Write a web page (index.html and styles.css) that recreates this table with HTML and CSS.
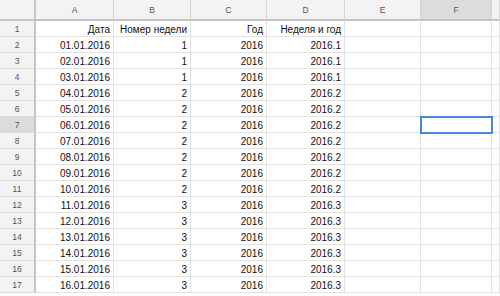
FILE: index.html
```html
<!DOCTYPE html>
<html lang="ru">
<head>
    <meta charset="UTF-8">
    <meta name="viewport" content="width=device-width, initial-scale=1.0">
    <title>Неделя и год</title>
    <link rel="stylesheet" href="styles.css">
</head>
<body>
    <table class="sheet">
        <colgroup>
            <col class="col-rowhead">
            <col class="col-a">
            <col class="col-b">
            <col class="col-c">
            <col class="col-d">
            <col class="col-e">
            <col class="col-f">
            <col class="col-g">
        </colgroup>
        <thead>
            <tr>
                <th class="corner"></th>
                <th>A</th>
                <th>B</th>
                <th>C</th>
                <th>D</th>
                <th>E</th>
                <th class="active">F</th>
                <th></th>
            </tr>
        </thead>
        <tbody>
            <tr><th>1</th><td>Дата</td><td>Номер недели</td><td>Год</td><td>Неделя и год</td><td></td><td></td><td></td></tr>
            <tr><th>2</th><td>01.01.2016</td><td>1</td><td>2016</td><td>2016.1</td><td></td><td></td><td></td></tr>
            <tr><th>3</th><td>02.01.2016</td><td>1</td><td>2016</td><td>2016.1</td><td></td><td></td><td></td></tr>
            <tr><th>4</th><td>03.01.2016</td><td>1</td><td>2016</td><td>2016.1</td><td></td><td></td><td></td></tr>
            <tr><th>5</th><td>04.01.2016</td><td>2</td><td>2016</td><td>2016.2</td><td></td><td></td><td></td></tr>
            <tr><th>6</th><td>05.01.2016</td><td>2</td><td>2016</td><td>2016.2</td><td></td><td></td><td></td></tr>
            <tr><th class="active">7</th><td>06.01.2016</td><td>2</td><td>2016</td><td>2016.2</td><td></td><td class="selected"></td><td></td></tr>
            <tr><th>8</th><td>07.01.2016</td><td>2</td><td>2016</td><td>2016.2</td><td></td><td></td><td></td></tr>
            <tr><th>9</th><td>08.01.2016</td><td>2</td><td>2016</td><td>2016.2</td><td></td><td></td><td></td></tr>
            <tr><th>10</th><td>09.01.2016</td><td>2</td><td>2016</td><td>2016.2</td><td></td><td></td><td></td></tr>
            <tr><th>11</th><td>10.01.2016</td><td>2</td><td>2016</td><td>2016.2</td><td></td><td></td><td></td></tr>
            <tr><th>12</th><td>11.01.2016</td><td>3</td><td>2016</td><td>2016.3</td><td></td><td></td><td></td></tr>
            <tr><th>13</th><td>12.01.2016</td><td>3</td><td>2016</td><td>2016.3</td><td></td><td></td><td></td></tr>
            <tr><th>14</th><td>13.01.2016</td><td>3</td><td>2016</td><td>2016.3</td><td></td><td></td><td></td></tr>
            <tr><th>15</th><td>14.01.2016</td><td>3</td><td>2016</td><td>2016.3</td><td></td><td></td><td></td></tr>
            <tr><th>16</th><td>15.01.2016</td><td>3</td><td>2016</td><td>2016.3</td><td></td><td></td><td></td></tr>
            <tr><th>17</th><td>16.01.2016</td><td>3</td><td>2016</td><td>2016.3</td><td></td><td></td><td></td></tr>
        </tbody>
    </table>
</body>
</html>
```

FILE: styles.css
```css
* {
    box-sizing: border-box;
    margin: 0;
    padding: 0;
}

body {
    background: #fff;
    font-family: 'Liberation Sans', Arial, sans-serif;
    color: #111;
    overflow: hidden;
}

.sheet {
    border-collapse: separate;
    border-spacing: 0;
    table-layout: fixed;
    width: 500px;
}

.col-rowhead { width: 36px; }
.col-a { width: 78px; }
.col-b { width: 77px; }
.col-c { width: 76px; }
.col-d { width: 78px; }
.col-e { width: 76px; }
.col-f { width: 71px; }
.col-g { width: 8px; }

.sheet td,
.sheet th {
    height: 16px;
    border-right: 1px solid #e2e2e2;
    border-bottom: 1px solid #e2e2e2;
    white-space: nowrap;
    overflow: hidden;
    vertical-align: middle;
}

.sheet td {
    font-size: 10px;
    text-align: right;
    padding: 1px 3px 0 2px;
}

/* column letters */
.sheet thead th {
    height: 21px;
    background: #f3f3f3;
    border-right-color: #d4d4d4;
    border-bottom: 2px solid #c4c4c4;
    font-size: 8.5px;
    font-weight: normal;
    color: #555;
    text-align: center;
}

/* row numbers */
.sheet tbody th {
    background: #f3f3f3;
    border-right: 2px solid #c4c4c4;
    border-bottom-color: #dcdcdc;
    font-size: 8.5px;
    font-weight: normal;
    color: #555;
    text-align: center;
}

.sheet thead th.corner {
    border-right: 2px solid #c4c4c4;
}

.sheet th.active {
    background: #dcdcdc;
}

.sheet td.selected {
    outline: 2px solid #4a86e8;
    outline-offset: -1px;
}
```
